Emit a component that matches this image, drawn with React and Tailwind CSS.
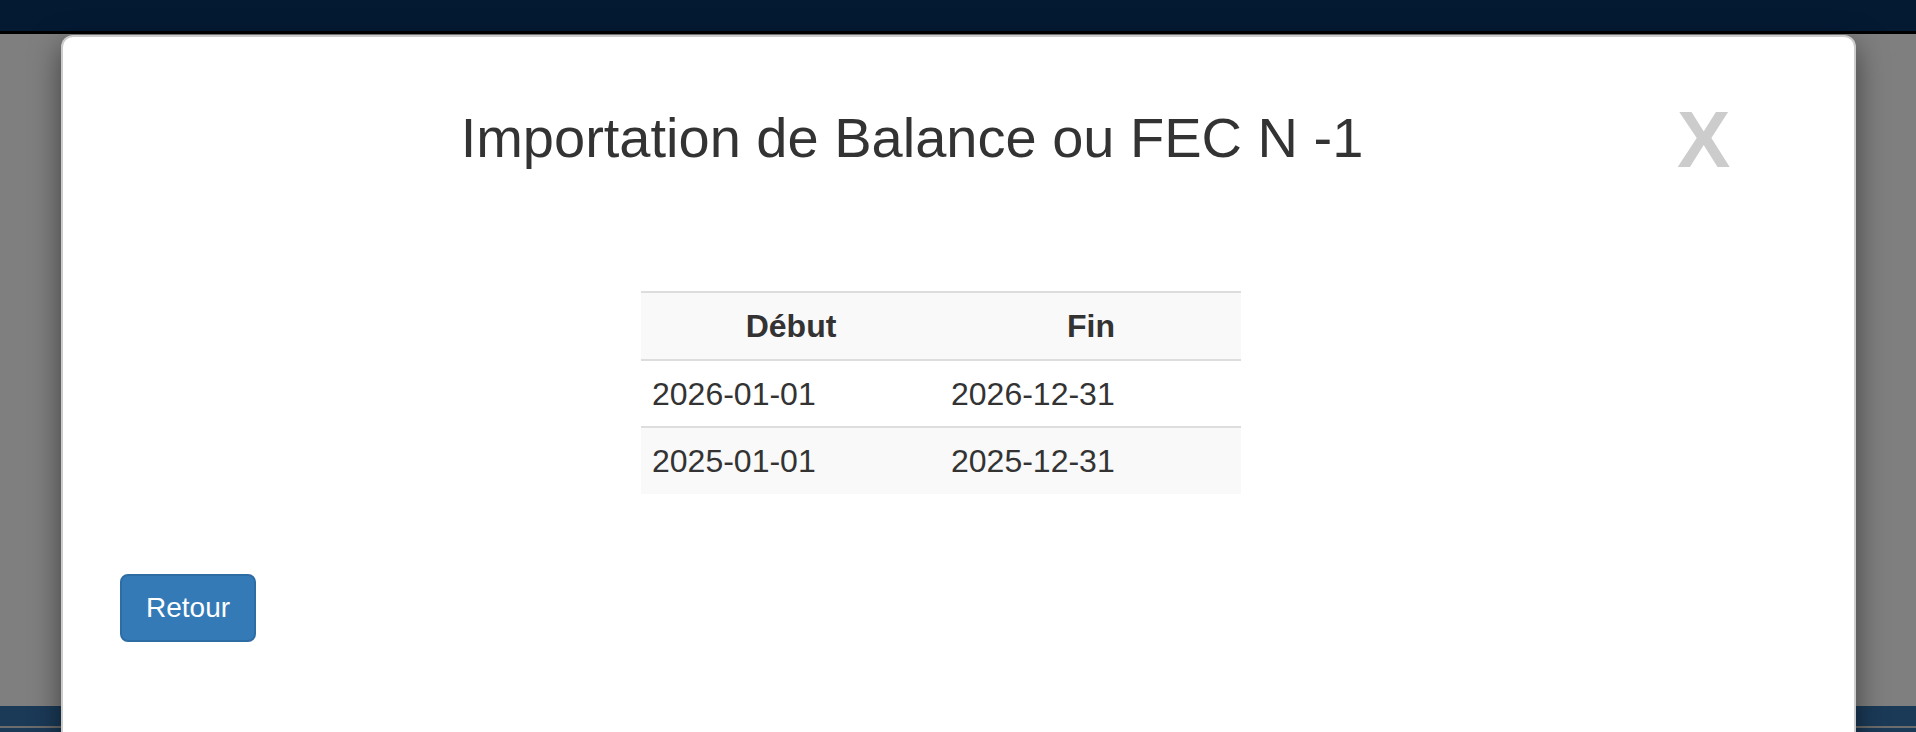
import React from 'react';

const periods = [
  { start: '2026-01-01', end: '2026-12-31' },
  { start: '2025-01-01', end: '2025-12-31' },
];

export default function App() {
  return (
    <div
      className="relative h-[732px] w-full overflow-hidden bg-[#7f7f7f] flex flex-col"
      style={{ fontFamily: '"Liberation Sans", Arial, Helvetica, sans-serif' }}
    >
      {/* page behind the overlay */}
      <div className="h-[34px] bg-[#041a33] border-b-[3px] border-black" />
      <div className="flex-1" />
      <div className="h-[20px] bg-[#1b3a58]" />
      <div className="h-[2px] bg-[#6c6c6c]" />
      <div className="h-[4px] bg-[#1b3a58]" />

      {/* modal */}
      <div className="absolute top-[35px] left-[61px] w-[1795px] h-[760px] bg-white rounded-[12px] border-2 border-black/20 shadow-[0_10px_30px_rgba(0,0,0,0.5)] text-[#333]">
        <div className="pt-[70px] mr-[93px] text-center text-[56px] leading-[62px]">
          Importation de Balance ou FEC N -1
        </div>

        <button className="absolute top-[63px] left-[1614px] text-[80px] leading-none font-bold text-[#cccccc]">
          X
        </button>

        <table className="mt-[122px] ml-[578px] w-[600px] border-collapse text-[32px]">
          <thead>
            <tr className="bg-[#f9f9f9] border-t-2 border-b-2 border-[#dddddd]">
              <th className="w-[300px] h-[68px] font-bold text-center">Début</th>
              <th className="w-[300px] h-[68px] font-bold text-center">Fin</th>
            </tr>
          </thead>
          <tbody>
            {periods.map((p, i) => (
              <tr
                key={p.start}
                className={(i % 2 === 1 ? 'bg-[#f9f9f9] ' : 'bg-white ') + (i > 0 ? 'border-t-2 border-[#dddddd]' : '')}
              >
                <td className="h-[67px] pl-[11px] text-left">{p.start}</td>
                <td className="h-[67px] pl-[10px] text-left">{p.end}</td>
              </tr>
            ))}
          </tbody>
        </table>

        <button className="mt-[80px] ml-[57px] px-[24px] py-[12px] text-[28px] leading-[40px] text-white bg-[#337ab7] border-2 border-[#2e6da4] rounded-[8px]">
          Retour
        </button>
      </div>
    </div>
  );
}
